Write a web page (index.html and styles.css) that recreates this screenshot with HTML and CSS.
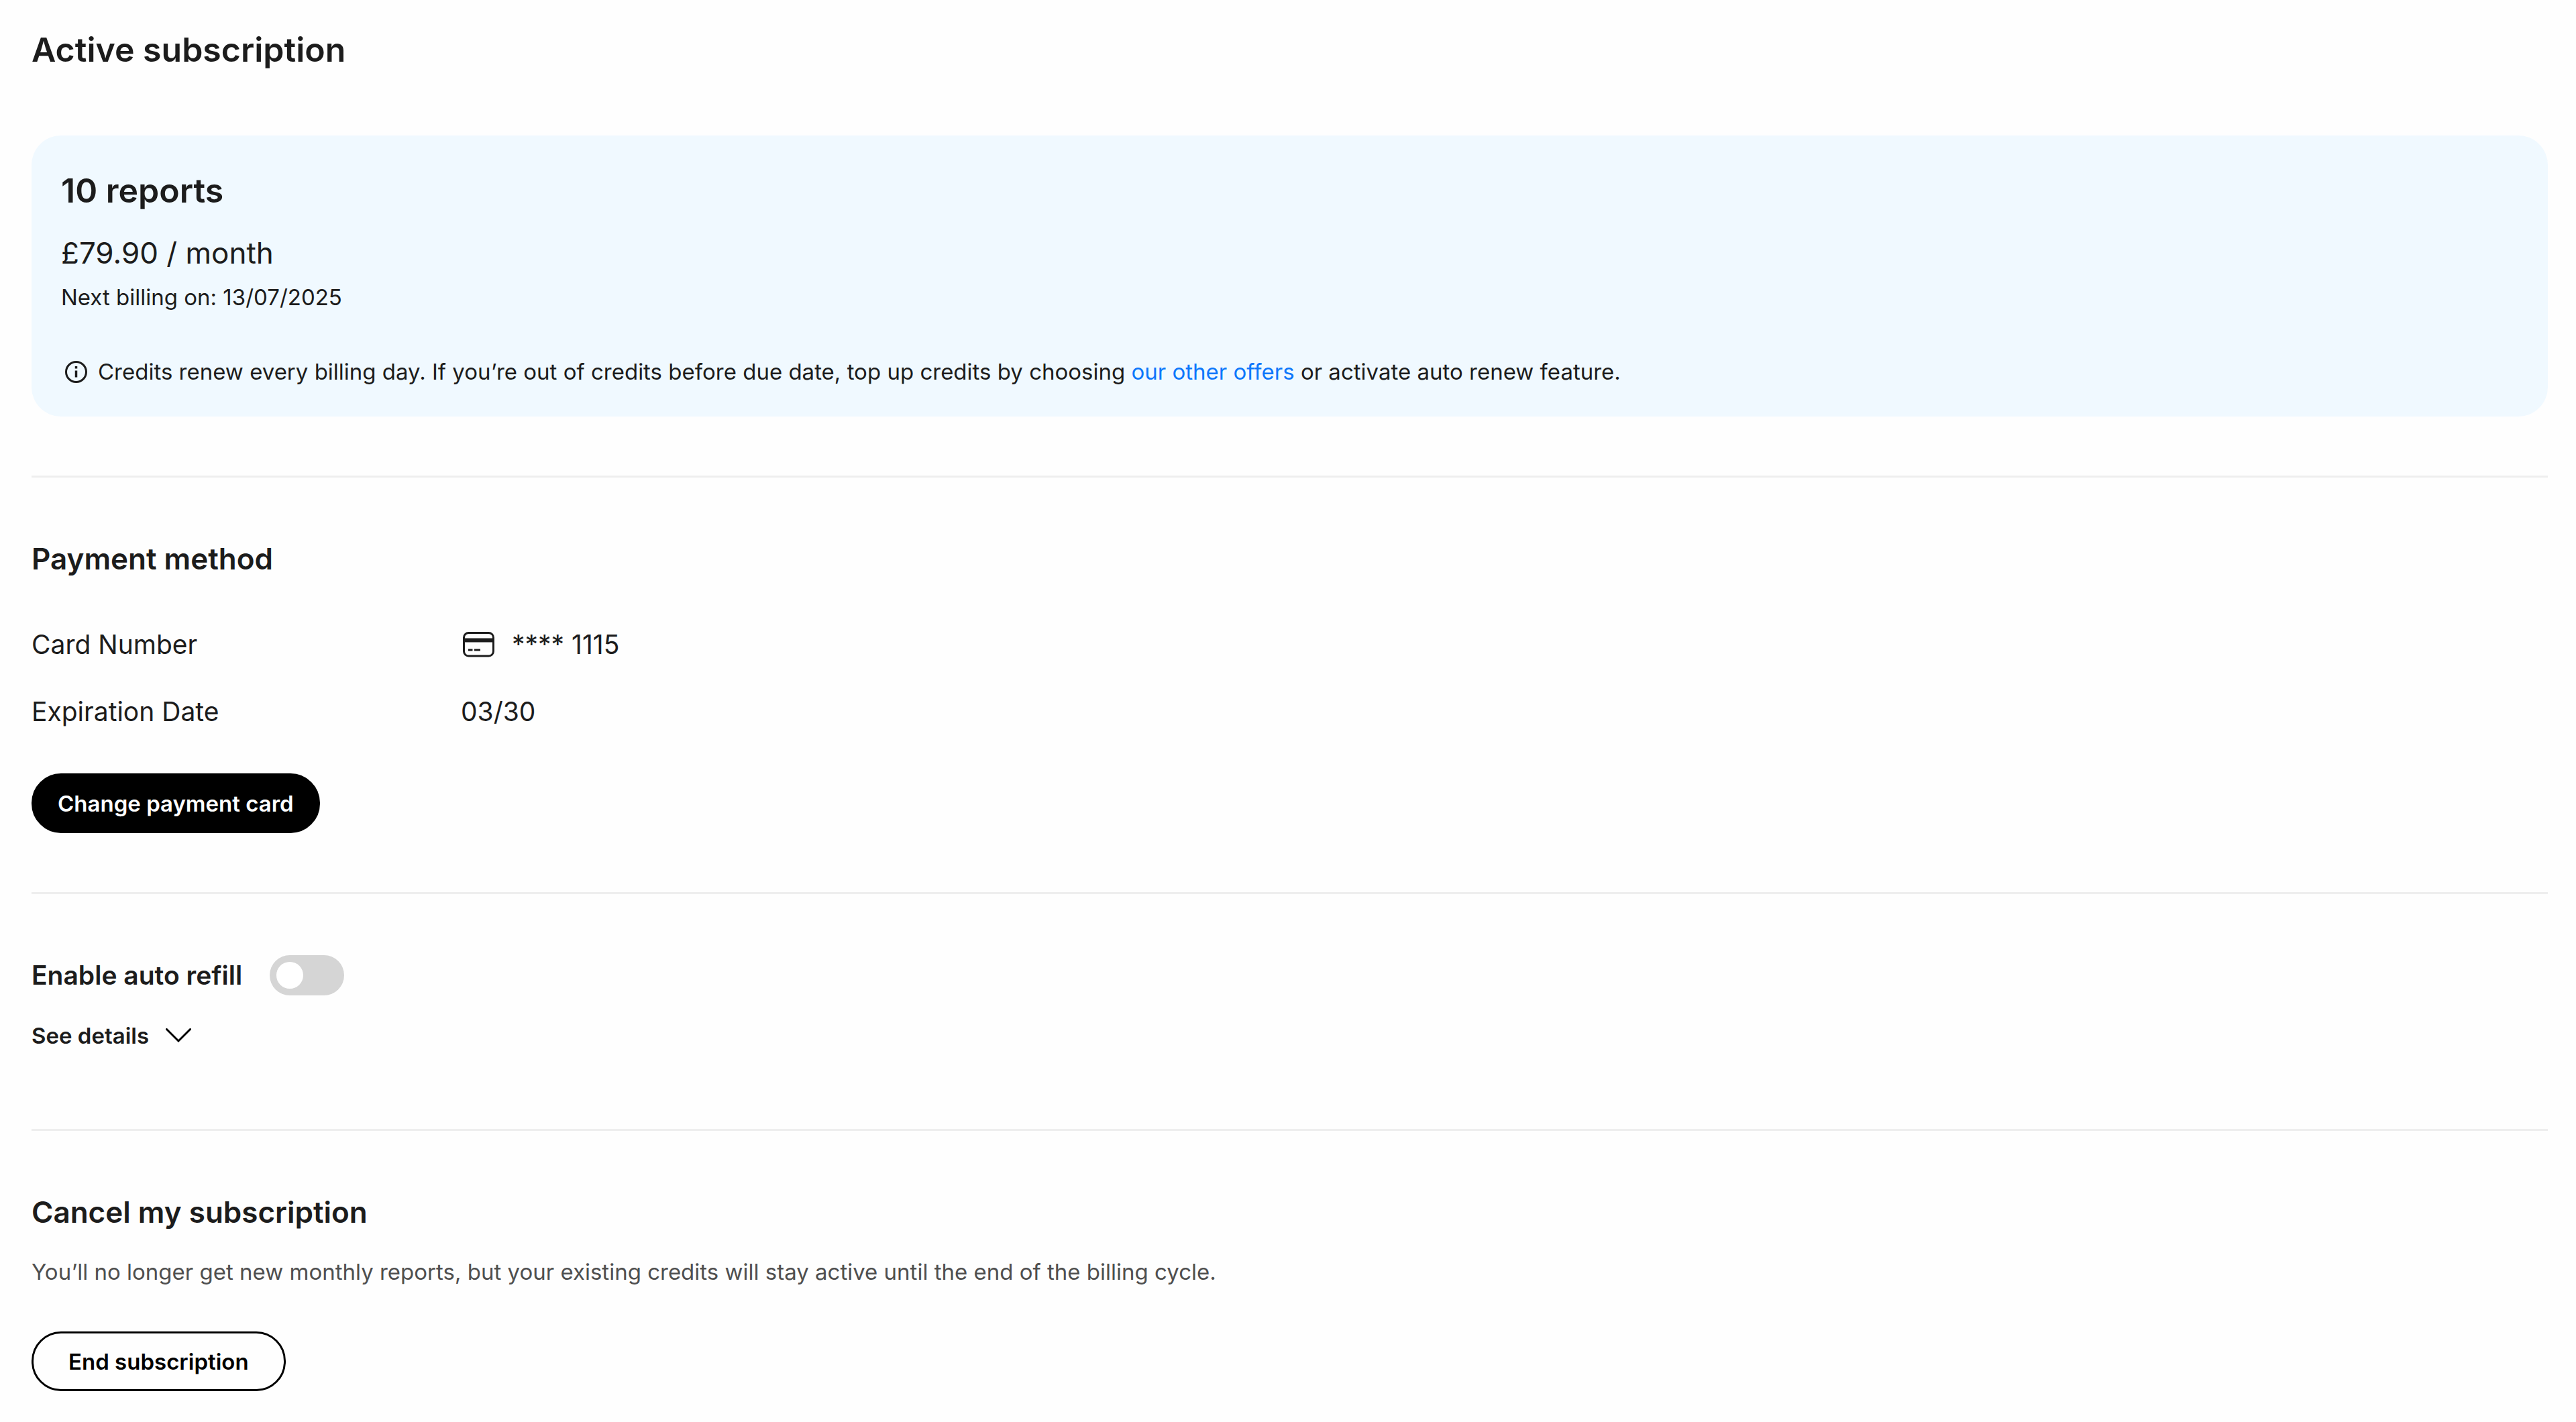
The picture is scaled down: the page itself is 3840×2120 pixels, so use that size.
FILE: index.html
```
<!DOCTYPE html>
<html lang="en">
<head>
    <meta charset="UTF-8">
    <meta name="viewport" content="width=device-width, initial-scale=1.0">
    <title>Active subscription</title>
    <link rel="stylesheet" href="styles.css">
</head>
<body>
    <main class="page">
        <section class="section plan">
            <h1 class="title">Active subscription</h1>
            <div class="plan-card">
                <h2 class="plan-name">10 reports</h2>
                <p class="price">£79.90 / month</p>
                <p class="billing">Next billing on: 13/07/2025</p>
                <div class="note">
                    <svg class="info-icon" viewBox="0 0 44 44" fill="none" stroke="currentColor">
                        <circle cx="22.500" cy="22.500" r="15" stroke-width="3"/>
                        <path d="M22.500 20.500V30.500" stroke-width="3.500"/>
                        <path d="M22.500 14V17.500" stroke-width="3.500"/>
                    </svg>
                    <p>Credits renew every billing day. If you’re out of credits before due date, top up credits by choosing <a href="#" class="link">our other offers</a> or activate auto renew feature.</p>
                </div>
            </div>
        </section>

        <section class="section">
            <h2 class="subtitle">Payment method</h2>
            <dl class="card-info">
                <dt>Card Number</dt>
                <dd>
                    <svg class="card-icon" viewBox="0 0 54 50" fill="none" stroke="currentColor">
                        <rect x="4.500" y="7.500" width="44" height="34.500" rx="7" stroke-width="3"/>
                        <path d="M4 18.500H49" stroke-width="6"/>
                        <path d="M11 33H17.500M20 33H29" stroke-width="3"/>
                    </svg>
                    <span>**** 1115</span>
                </dd>
                <dt>Expiration Date</dt>
                <dd>03/30</dd>
            </dl>
            <button class="btn btn-dark">Change payment card</button>
        </section>

        <section class="section refill">
            <div class="refill-row">
                <label for="refill" class="refill-label">Enable auto refill</label>
                <input type="checkbox" id="refill" class="toggle">
            </div>
            <button class="details">
                See details
                <svg class="chevron" viewBox="0 0 38 22" fill="none" stroke="currentColor" stroke-width="3">
                    <path d="M1.500 1.500L19 19L36.500 1.500" stroke-linecap="round"/>
                </svg>
            </button>
        </section>

        <section class="section">
            <h2 class="subtitle">Cancel my subscription</h2>
            <p class="cancel-text">You’ll no longer get new monthly reports, but your existing credits will stay active until the end of the billing cycle.</p>
            <button class="btn btn-outline">End subscription</button>
        </section>
    </main>
</body>
</html>
```

FILE: styles.css
```
* {
    margin: 0;
    padding: 0;
    box-sizing: border-box;
}
body{
    background-color: #fefefe;
    color: #1c1c1c;
    font-family: Inter, "Liberation Sans", sans-serif;
    font-size: 33px;
    line-height: 50px;
}
button{
    font: inherit;
    cursor: pointer;
}
.page{
    padding: 0 42px 0 47px;
}
.section{
    padding: 91px 0 88px;
    border-bottom: 3px solid #eeeeee;
}
.section:last-child{
    padding-bottom: 44px;
    border-bottom: none;
}

/* current plan */
.plan{
    padding-top: 44px;
}
.title, .plan-name{
    font-size: 50px;
    font-weight: 600;
    line-height: 60px;
}
.title{
    margin-bottom: 98px;
}
.plan-card{
    padding: 52px 44px 42px;
    border-radius: 44px;
    background-color: #f0f9ff;
}
.price{
    margin: 33px 0 11px;
    font-size: 44px;
    line-height: 60px;
}
.note{
    display: flex;
    align-items: center;
    gap: 11px;
    margin-top: 61px;
}
.info-icon{
    flex: none;
    width: 44px;
    height: 44px;
}
.link{
    color: #0d77fb;
    text-decoration: none;
}

/* payment */
.subtitle{
    font-size: 44px;
    font-weight: 600;
    line-height: 60px;
}
.card-info{
    display: grid;
    grid-template-columns: 640px 1fr;
    row-gap: 50px;
    margin: 73px 0 67px;
    font-size: 39px;
}
.card-info dd{
    display: flex;
    align-items: center;
    gap: 22px;
}
.card-icon{
    width: 54px;
    height: 50px;
}
.btn{
    display: block;
    height: 89px;
    border: 3px solid #000000;
    border-radius: 44px;
    font-weight: 600;
}
.btn-dark{
    padding: 0 36px;
    background-color: #000000;
    color: #ffffff;
}
.btn-outline{
    padding: 0 52px;
    background-color: transparent;
    color: #000000;
}

/* auto refill */
.refill{
    padding-bottom: 114px;
}
.refill-row{
    display: flex;
    align-items: center;
    gap: 41px;
    margin-bottom: 35px;
}
.refill-label{
    font-size: 39px;
    font-weight: 600;
    line-height: 60px;
}
.toggle{
    appearance: none;
    width: 111px;
    height: 60px;
    padding: 10px;
    border-radius: 30px;
    background-color: #d5d5d5;
    cursor: pointer;
}
.toggle::before{
    content: "";
    display: block;
    width: 40px;
    height: 40px;
    border-radius: 50%;
    background-color: #ffffff;
}
.toggle:checked{
    background-color: #000000;
}
.toggle:checked::before{
    margin-left: auto;
}
.details{
    display: flex;
    align-items: center;
    gap: 25px;
    border: none;
    background-color: transparent;
    color: #1c1c1c;
    font-weight: 600;
}
.chevron{
    width: 38px;
    height: 22px;
    color: #000000;
}

/* cancel */
.cancel-text{
    margin: 34px 0 64px;
    color: #4f4f4f;
}
```
